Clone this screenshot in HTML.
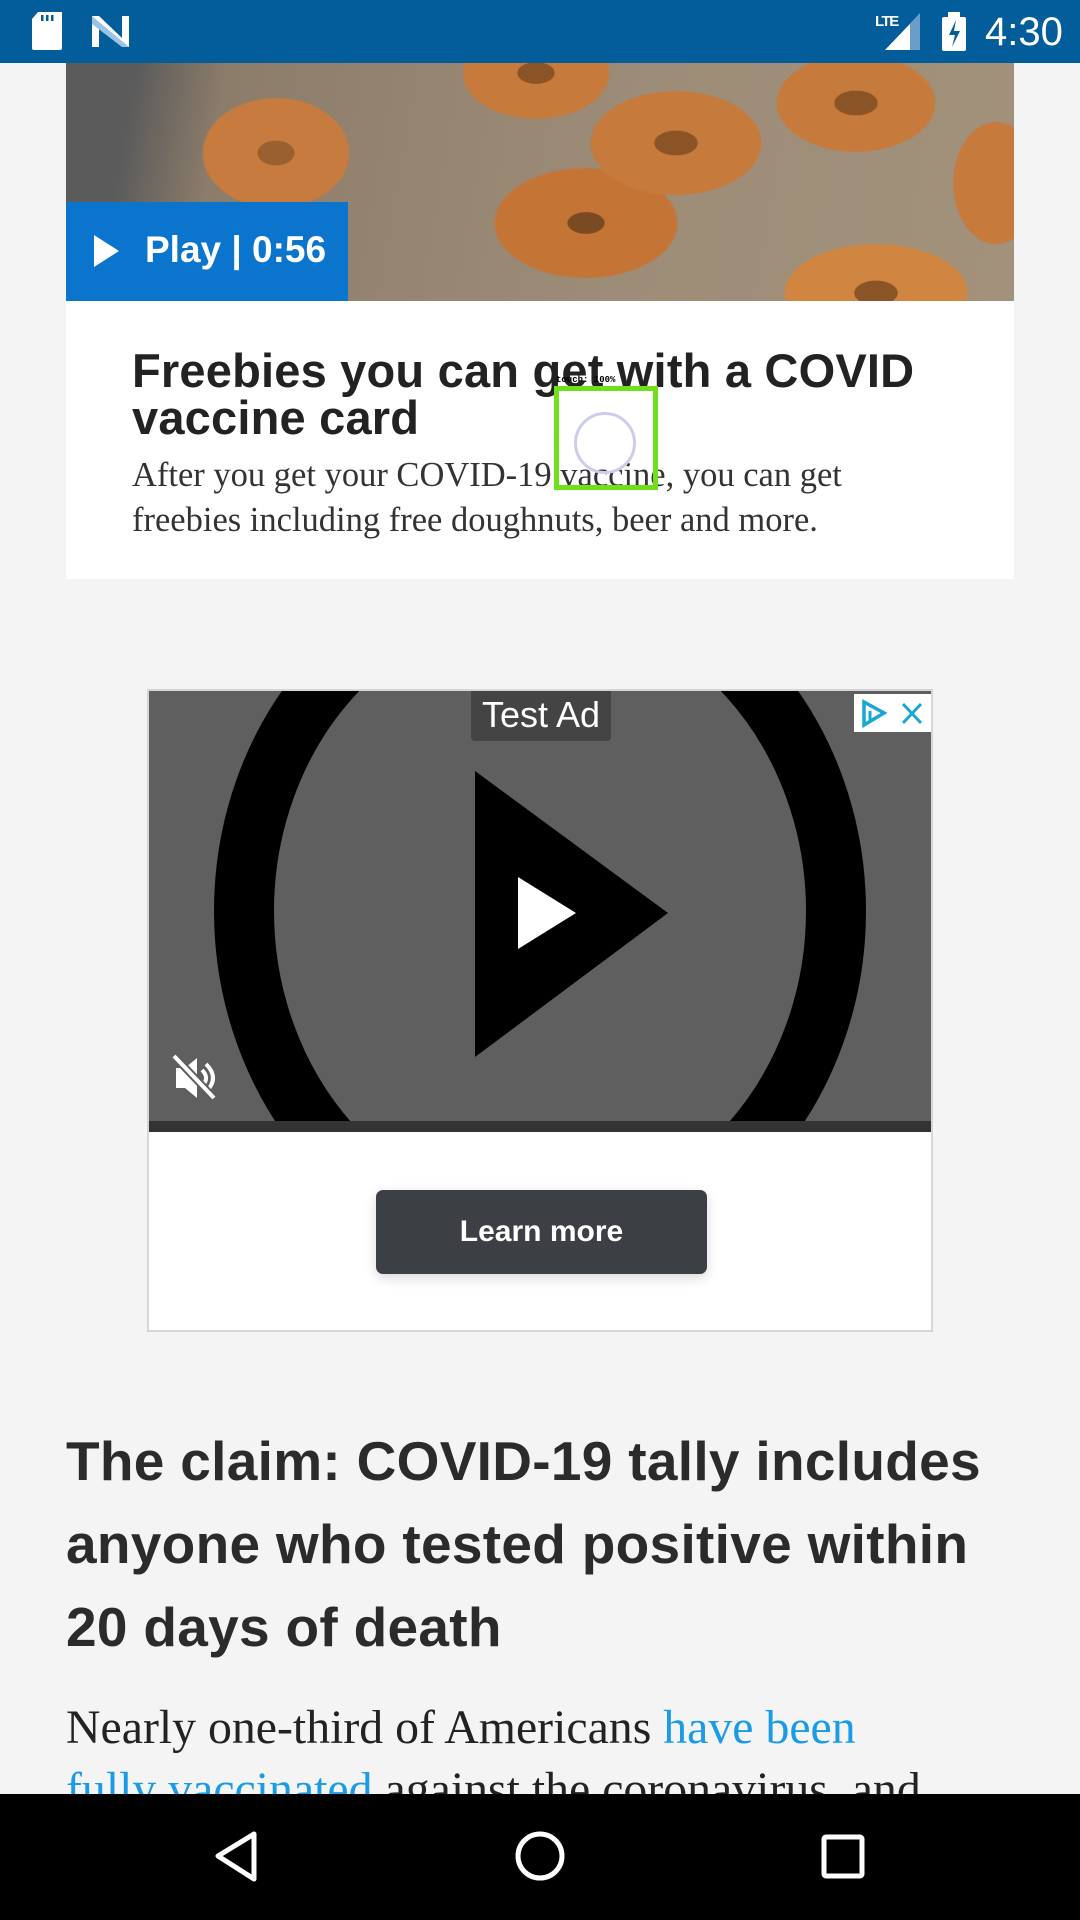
<!DOCTYPE html>
<html><head><meta charset="utf-8"><style>
*{margin:0;padding:0;box-sizing:border-box}
body{width:1080px;height:1920px;overflow:hidden;background:#f4f4f4;position:relative;font-family:"Liberation Sans",sans-serif}
.abs{position:absolute}
</style></head><body>
<!-- status bar -->
<div class="abs" style="left:0;top:0;width:1080px;height:63px;background:#035d9b"></div>
<svg class="abs" style="left:0;top:0" width="1080" height="63">
<path d="M32 19l6-7h24v36a2 2 0 0 1-2 2H34a2 2 0 0 1-2-2z" fill="#fff"/>
<rect x="41" y="15" width="2.5" height="6" fill="#035d9b"/><rect x="46" y="15" width="2.5" height="6" fill="#035d9b"/><rect x="51" y="15" width="2.5" height="6" fill="#035d9b"/>
<path d="M92 16h7l23 22V16h7v31h-7L99 25v22h-7z" fill="#fff"/>
<path d="M92 16l37 31h-7L92 24z" fill="#9cc3e6"/>
<text x="875" y="26" font-family="Liberation Sans" font-size="15" font-weight="bold" fill="#fff" style="letter-spacing:-1.5px">LTE</text>
<path d="M885 50L920 13v37z" fill="#6a9ec9"/>
<path d="M885 50L910 24v26z" fill="#fff"/>
<rect x="942" y="17" width="24" height="34" rx="2" fill="#fff"/><rect x="948" y="12" width="12" height="6" fill="#fff"/>
<path d="M956 20l-7 15h6l-3 12 8-16h-6z" fill="#035d9b"/>
<text x="985" y="45" font-family="Liberation Sans" font-size="40" fill="#fff">4:30</text>
</svg>

<!-- card -->
<div class="abs" style="left:66px;top:63px;width:948px;height:516px;background:#fff;overflow:hidden">
  <div class="abs" style="left:0;top:0;width:948px;height:238px;background:
  radial-gradient(ellipse 70px 40px at 610px 80px,#8a5426 30%,transparent 32%),
  radial-gradient(ellipse 140px 85px at 610px 80px,#c67a3c 60%,transparent 62%),
  radial-gradient(ellipse 70px 40px at 790px 40px,#8a5426 30%,transparent 32%),
  radial-gradient(ellipse 130px 80px at 790px 40px,#c67a3c 60%,transparent 62%),
  radial-gradient(ellipse 60px 35px at 470px 10px,#8a5426 30%,transparent 32%),
  radial-gradient(ellipse 120px 75px at 470px 10px,#c67a3c 60%,transparent 62%),
  radial-gradient(ellipse 60px 35px at 520px 160px,#7a4a22 30%,transparent 32%),
  radial-gradient(ellipse 150px 90px at 520px 160px,#c47535 60%,transparent 62%),
  radial-gradient(ellipse 70px 40px at 810px 230px,#8a5426 30%,transparent 32%),
  radial-gradient(ellipse 150px 80px at 810px 230px,#d08540 60%,transparent 62%),
  radial-gradient(ellipse 60px 40px at 210px 90px,#9a6030 30%,transparent 32%),
  radial-gradient(ellipse 120px 90px at 210px 90px,#c87b3f 60%,transparent 62%),
  radial-gradient(ellipse 70px 100px at 930px 120px,#c67a3c 60%,transparent 62%),
  linear-gradient(100deg,#5b5b5b 0,#5b5b5b 70px,#8c7c6a 160px,#9d8d78 60%,#a2917b 100%)"></div>
  <div class="abs" style="left:0;top:139px;width:282px;height:99px;background:#0b74cc"></div>
  <svg class="abs" style="left:28px;top:172px" width="26" height="32"><path d="M0 0L25 16L0 32z" fill="#fff"/></svg>
  <div class="abs" style="left:79px;top:167px;color:#fff;font-weight:bold;font-size:37px;line-height:40px;white-space:nowrap">Play | 0:56</div>
  <div class="abs" style="left:66px;top:284px;color:#222;font-weight:bold;font-size:47px;line-height:47px;white-space:nowrap;letter-spacing:0.2px">Freebies you can get with a COVID<br>vaccine card</div>
  <div class="abs" style="left:66px;top:390px;color:#333;font-family:'Liberation Serif',serif;font-size:34.5px;line-height:45px;white-space:nowrap">After you get your COVID-19 vaccine, you can get<br>freebies including free doughnuts, beer and more.</div>
</div>
<!-- touch overlay -->
<div class="abs" style="left:554px;top:386px;width:104px;height:104px;border:5px solid #6fe01a"></div>
<div class="abs" style="left:574px;top:412px;width:62px;height:62px;border-radius:50%;border:3px solid #ccccee"></div>
<div class="abs" style="left:556px;top:375px;font-family:'Liberation Mono',monospace;font-size:9px;font-weight:bold;color:#000">touch: 100%</div>

<!-- ad -->
<div class="abs" style="left:147px;top:689px;width:786px;height:643px;background:#fff;border:2px solid #d6d6d6;overflow:hidden">
  <div class="abs" style="left:0;top:0;width:782px;height:441px;background:#5f5f5f;overflow:hidden">
    <svg class="abs" style="left:0;top:0" width="782" height="441">
      <ellipse cx="391" cy="220" rx="296" ry="330" fill="none" stroke="#000" stroke-width="60"/>
      <path d="M326 80L519 222L326 366z" fill="#000"/>
      <path d="M369 186L427 222L369 258z" fill="#fff"/>
      <g transform="translate(27,387)" fill="#fff">
        <path d="M0 -10h9l12 -10v40l-12 -10h-9z"/>
        <path d="M26 -8q8 8 0 16M30 -14q14 14 0 28" stroke="#fff" stroke-width="4" fill="none"/>
        <path d="M-2 -22L38 20" stroke="#5f5f5f" stroke-width="8"/>
        <path d="M-2 -22L38 20" stroke="#fff" stroke-width="4"/>
      </g>
    </svg>
    <div class="abs" style="left:0;top:430px;width:782px;height:11px;background:#333"></div>
  </div>
  <div class="abs" style="left:322px;top:0;width:140px;height:50px;background:#444;border-radius:0 0 4px 4px;color:#fff;font-size:36px;line-height:48px;text-align:center">Test Ad</div>
  <div class="abs" style="left:705px;top:3px;width:77px;height:38px;background:#fff"></div>
  <svg class="abs" style="left:710px;top:8px" width="70" height="30">
    <path d="M5 3L25 14L5 26z" fill="none" stroke="#1aa7d2" stroke-width="3.5"/>
    <path d="M11 12v9" stroke="#1aa7d2" stroke-width="3"/>
    <path d="M44 5L62 24M62 5L44 24" stroke="#1aa7d2" stroke-width="3"/>
  </svg>
  <div class="abs" style="left:227px;top:499px;width:331px;height:84px;background:#3c3f43;border-radius:7px;box-shadow:0 4px 12px rgba(0,0,0,0.15);color:#fff;font-weight:bold;font-size:30px;line-height:84px;text-align:center">Learn more</div>
</div>

<!-- heading -->
<div class="abs" style="left:66px;top:1420px;color:#2b2b2b;font-weight:bold;font-size:55px;line-height:83px;white-space:nowrap;letter-spacing:0.3px">The claim: COVID-19 tally includes<br>anyone who tested positive within<br>20 days of death</div>
<div class="abs" style="left:66px;top:1697px;color:#222;font-family:'Liberation Serif',serif;font-size:47.8px;line-height:62px;white-space:nowrap">Nearly one-third of Americans <span style="color:#1a9be6">have been</span><br><span style="color:#1a9be6;text-decoration:underline">fully vaccinated</span> against the coronavirus, and</div>

<!-- nav bar -->
<div class="abs" style="left:0;top:1794px;width:1080px;height:126px;background:#000"></div>
<svg class="abs" style="left:0;top:1794px" width="1080" height="126">
  <path d="M254 40L218 62L254 85z" fill="none" stroke="#fff" stroke-width="5" stroke-linejoin="round"/>
  <circle cx="540" cy="62" r="22" fill="none" stroke="#fff" stroke-width="5"/>
  <rect x="824" y="43" width="38" height="39" rx="2" fill="none" stroke="#fff" stroke-width="5"/>
</svg>
</body></html>
